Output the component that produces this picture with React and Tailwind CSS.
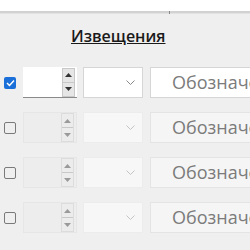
import React from "react";

function Spinner({ disabled }) {
  const tri = disabled ? "#9a9a9a" : "#333";
  return (
    <div className={`flex flex-col w-[13px] h-[29px] border ${disabled ? "border-[#dcdcdc] bg-[#ececec]" : "border-[#c8c8c8] bg-[#e6e6e6]"}`}>
      <div className="flex-1 flex items-center justify-center border-b border-[#c8c8c8]">
        <svg width="7" height="4" viewBox="0 0 7 4"><path d="M0 4 L3.5 0 L7 4 Z" fill={tri} /></svg>
      </div>
      <div className="flex-1 flex items-center justify-center">
        <svg width="7" height="4" viewBox="0 0 7 4"><path d="M0 0 L3.5 4 L7 0 Z" fill={tri} /></svg>
      </div>
    </div>
  );
}

function Row({ active }) {
  return (
    <div className="flex items-center h-[31px]">
      {active ? (
        <div className="ml-[4px] w-[12px] h-[12px] rounded-[2px] bg-[#1b6fd8] flex items-center justify-center">
          <svg width="9" height="8" viewBox="0 0 9 8"><path d="M1 4 L3.5 6.5 L8 1.5" stroke="white" strokeWidth="1.5" fill="none" /></svg>
        </div>
      ) : (
        <div className="ml-[4px] w-[12px] h-[12px] rounded-[2px] border border-[#7a7a7a]" />
      )}
      <div className={`ml-[7px] w-[54px] h-[31px] flex items-center justify-end pr-[2px] ${active ? "bg-white border-b border-[#8a8a8a]" : "bg-[#ededed] border border-[#e6e6e6]"}`}>
        <Spinner disabled={!active} />
      </div>
      <div className={`ml-[6px] w-[60px] h-[31px] flex items-center justify-end pr-[7px] border ${active ? "bg-white border-[#d6d6d6]" : "bg-[#f7f7f7] border-[#ececec]"}`}>
        <svg width="9" height="5" viewBox="0 0 9 5"><path d="M0.5 0.5 L4.5 4.5 L8.5 0.5" stroke={active ? "#8a8a8a" : "#c4c4c4"} strokeWidth="1" fill="none" /></svg>
      </div>
      <div className={`ml-[7px] flex-1 h-[31px] flex items-center pl-[21px] border whitespace-nowrap overflow-hidden ${active ? "bg-white border-[#d6d6d6]" : "bg-[#f5f5f5] border-[#e4e4e4]"}`}>
        <span className="text-[18px] text-[#7b7b7b]" style={{ fontFamily: "'Open Sans', sans-serif" }}>Обозначение</span>
      </div>
    </div>
  );
}

export default function App() {
  return (
    <div className="w-[250px] h-[250px] bg-[#efefef] overflow-hidden">
      <div className="h-[11px] bg-white" />
      <div className="relative h-[3px] bg-[#d2d2d2] border-b border-[#e2e2e2]">
        <div className="absolute left-[169px] top-0 w-[1px] h-[3px] bg-[#8a8a8a]" />
      </div>
      <div className="pt-[10px] pl-[71px] h-[53px]">
        <span className="text-[16px] font-semibold underline text-[#1a1a1a]" style={{ fontFamily: "'Open Sans', sans-serif" }}>Извещения</span>
      </div>
      <div className="flex flex-col gap-[14px] w-[270px]">
        <Row active />
        <Row />
        <Row />
        <Row />
      </div>
    </div>
  );
}
